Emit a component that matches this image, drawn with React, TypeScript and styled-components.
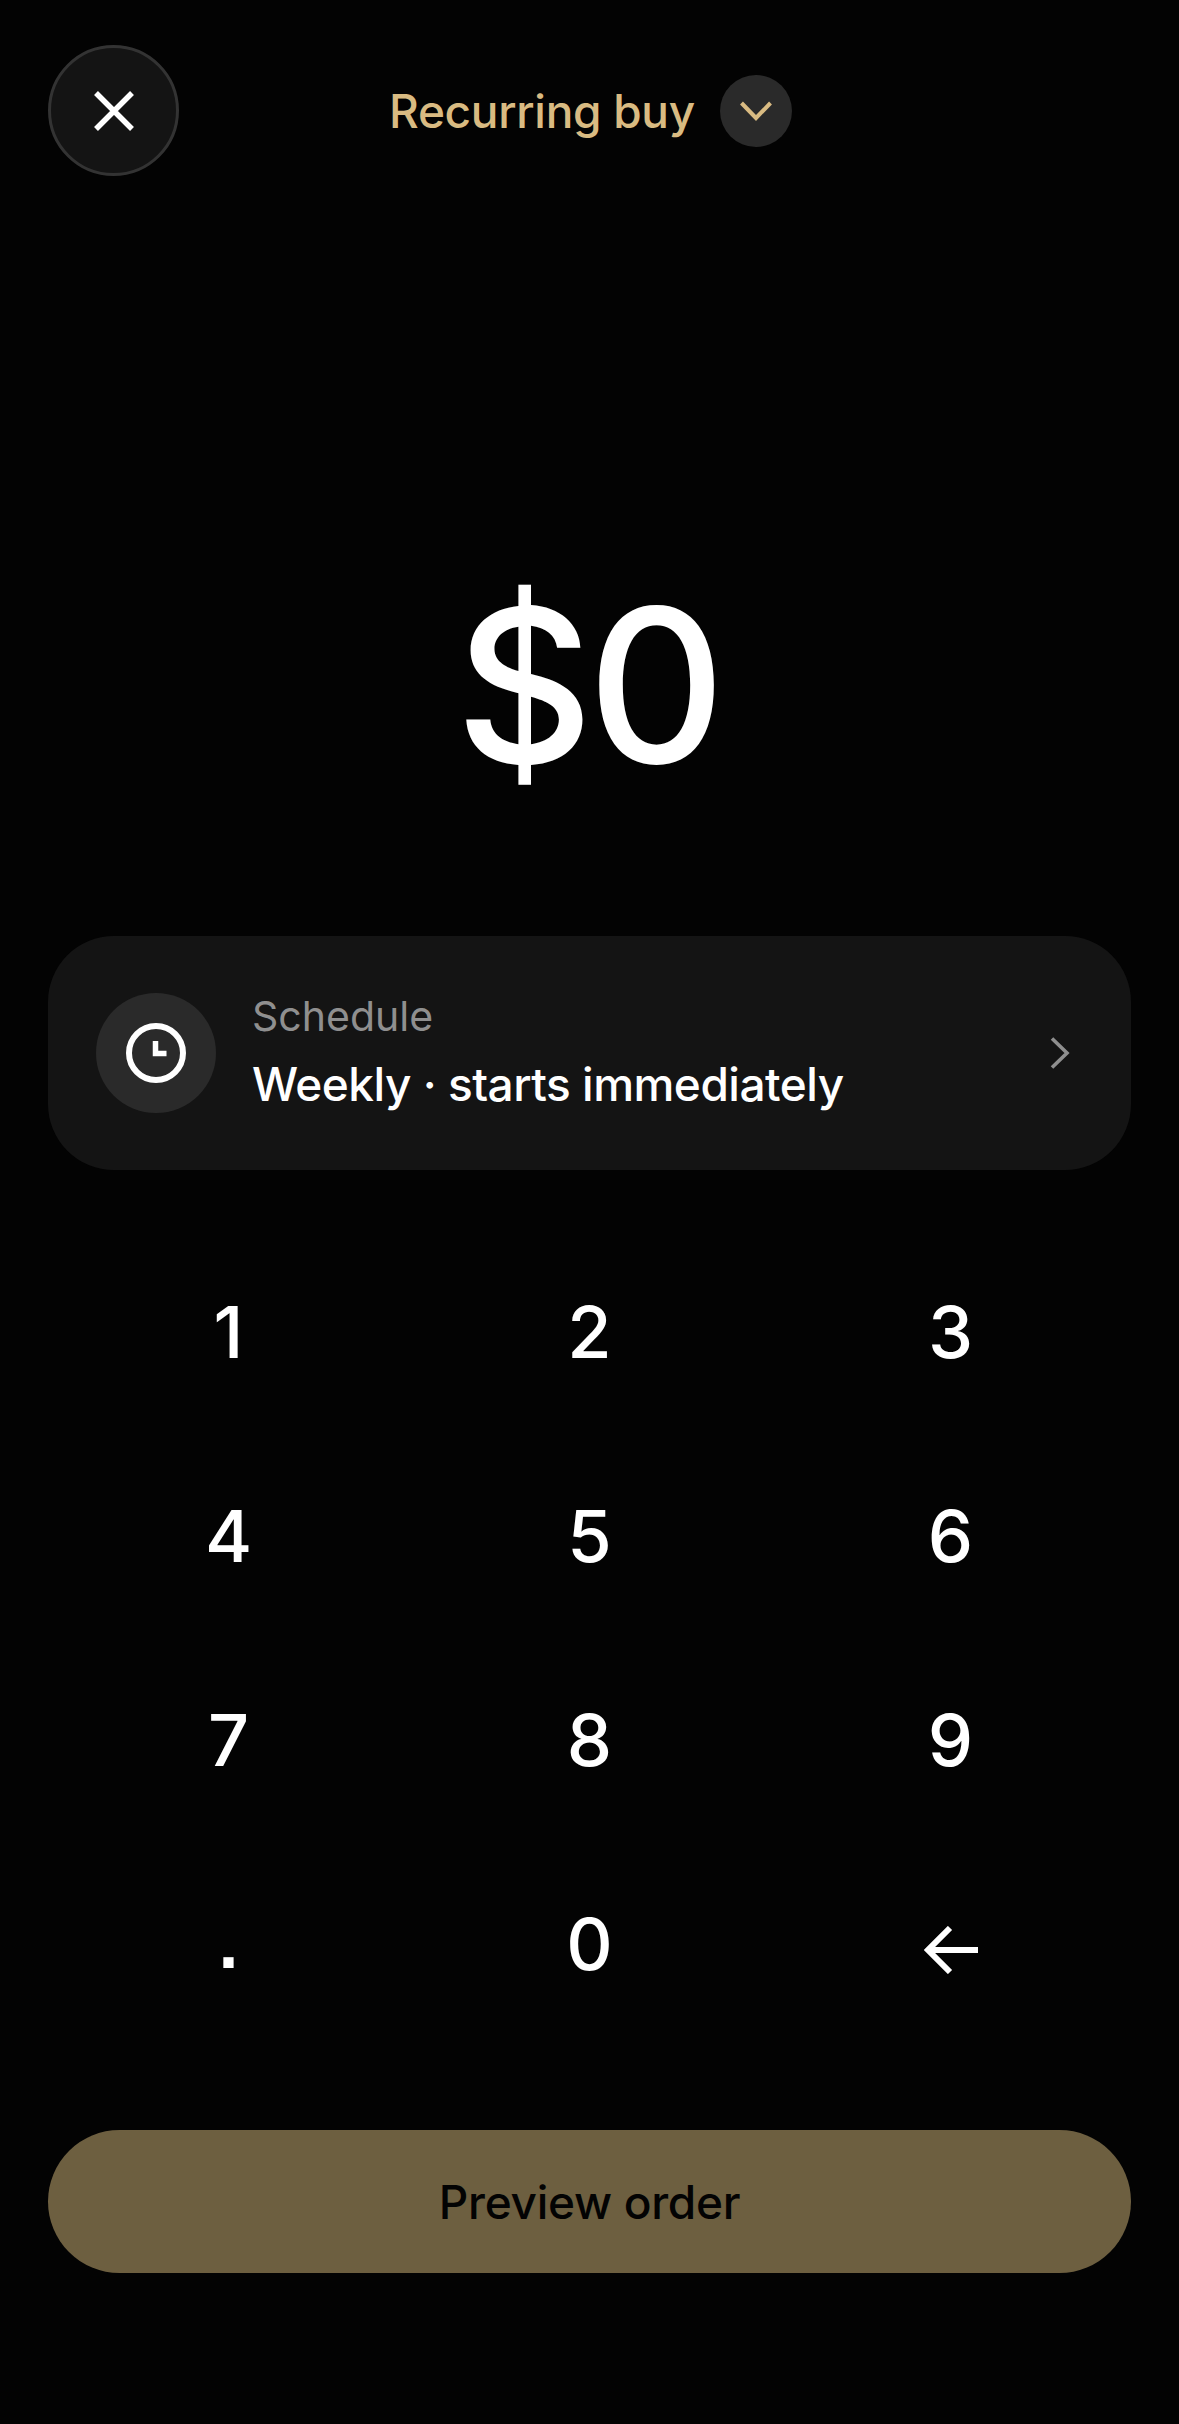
import React from "react";
import styled, { createGlobalStyle } from "styled-components";

const GlobalStyle = createGlobalStyle`
    html, body {
        margin: 0;
        padding: 0;
        background: #030303;
    }
    * {
        box-sizing: border-box;
    }
`;

const KEYS = ["1", "2", "3", "4", "5", "6", "7", "8", "9", ".", "0"];

export default function App() {
    return (
        <>
            <GlobalStyle />
            <Screen>
                <Header>
                    <CloseButton>
                        <svg width="40" height="40" viewBox="0 0 40 40" fill="none" stroke="#fff" strokeWidth="5.5">
                            <path d="M2 2l36 36M38 2L2 38" />
                        </svg>
                    </CloseButton>
                    <TitleRow>
                        <Title>Recurring buy</Title>
                        <TitleChevron>
                            <svg width="32" height="20" viewBox="0 0 32 20" fill="none" stroke="#d9bb82" strokeWidth="4">
                                <path d="M1.5 2L16 17 30.5 2" />
                            </svg>
                        </TitleChevron>
                    </TitleRow>
                </Header>
                <Amount>$0</Amount>
                <ScheduleCard>
                    <ClockCircle>
                        <svg width="60" height="60" viewBox="0 0 60 60" fill="none" stroke="#fff">
                            <circle cx="30" cy="30" r="27" strokeWidth="6" />
                            <path d="M29.5 18v12.5h11" strokeWidth="5.5" />
                        </svg>
                    </ClockCircle>
                    <ScheduleText>
                        <ScheduleLabel>Schedule</ScheduleLabel>
                        <ScheduleValue>Weekly · starts immediately</ScheduleValue>
                    </ScheduleText>
                    <RowChevron width="20" height="32" viewBox="0 0 20 32" fill="none" stroke="#8f8f8f" strokeWidth="3.6">
                        <path d="M2 1.5L17 16 2 30.5" />
                    </RowChevron>
                </ScheduleCard>
                <Keypad>
                    {KEYS.map((key) => (
                        <Key key={key} $dot={key === "."}>
                            {key}
                        </Key>
                    ))}
                    <Key>
                        <BackArrow width="54" height="48" viewBox="0 0 54 48" fill="none" stroke="#fff" strokeWidth="6">
                            <path d="M54 24H5M26 2L4 24l22 22" />
                        </BackArrow>
                    </Key>
                </Keypad>
                <PreviewButton>Preview order</PreviewButton>
            </Screen>
        </>
    );
}

const Screen = styled.div`
    width: 1179px;
    height: 2424px;
    padding: 45px 48px 0;
    background: #030303;
    color: #fff;
    font-family: Inter, "Liberation Sans", sans-serif;
    overflow: hidden;
`;

const Header = styled.div`
    display: flex;
    align-items: center;
    height: 131px;
`;

const CloseButton = styled.div`
    width: 131px;
    height: 131px;
    flex: none;
    display: flex;
    align-items: center;
    justify-content: center;
    border-radius: 50%;
    background: #141414;
    border: 3px solid #333;
`;

const TitleRow = styled.div`
    display: flex;
    align-items: center;
    gap: 25px;
    margin-left: 210px;
`;

const Title = styled.div`
    font-size: 46px;
    font-weight: 500;
    letter-spacing: -0.3px;
    color: #d9bb82;
`;

const TitleChevron = styled.div`
    width: 72px;
    height: 72px;
    display: flex;
    align-items: center;
    justify-content: center;
    border-radius: 50%;
    background: #2a2a2a;
`;

const Amount = styled.div`
    margin-top: 375px;
    height: 275px;
    padding-right: 4px;
    text-align: center;
    font-size: 214px;
    line-height: 270px;
    font-weight: 500;
    letter-spacing: -6px;
`;

const ScheduleCard = styled.div`
    display: flex;
    align-items: center;
    height: 234px;
    margin-top: 110px;
    padding: 0 48px;
    border-radius: 66px;
    background: #141414;
`;

const ClockCircle = styled.div`
    width: 120px;
    height: 120px;
    flex: none;
    display: flex;
    align-items: center;
    justify-content: center;
    border-radius: 50%;
    background: #2a2a2a;
`;

const ScheduleText = styled.div`
    flex: 1;
    margin-left: 36px;
    padding-bottom: 3px;
    display: flex;
    flex-direction: column;
    gap: 15px;
`;

const ScheduleLabel = styled.div`
    font-size: 41px;
    line-height: 50px;
    color: #8f8f8f;
`;

const ScheduleValue = styled.div`
    font-size: 46px;
    line-height: 56px;
    font-weight: 500;
    letter-spacing: -0.5px;
`;

const RowChevron = styled.svg`
    margin-right: 13px;
`;

const Keypad = styled.div`
    display: grid;
    grid-template-columns: repeat(3, 361px);
    grid-auto-rows: 204px;
    margin-top: 59px;
`;

const Key = styled.div<{ $dot?: boolean }>`
    display: flex;
    align-items: center;
    justify-content: center;
    font-family: ${(p) => (p.$dot ? '"Liberation Sans", sans-serif' : "inherit")};
    font-size: 72px;
    font-weight: ${(p) => (p.$dot ? 700 : 500)};
`;

const BackArrow = styled.svg`
    margin-top: 14px;
`;

const PreviewButton = styled.div`
    display: flex;
    align-items: center;
    justify-content: center;
    height: 143px;
    margin-top: 85px;
    border-radius: 72px;
    background: #6d5f40;
    color: #030303;
    font-size: 46px;
    font-weight: 500;
    letter-spacing: -0.3px;
`;
